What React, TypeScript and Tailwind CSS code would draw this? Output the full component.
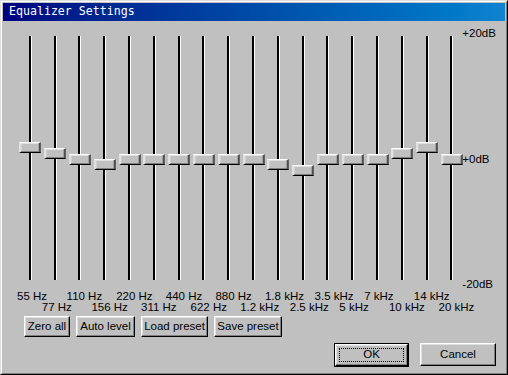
import React from 'react';

interface Band {
  label: string;
  top: number;
}

// thumb offsets are pixels from the top of the track
const bands: Band[] = [
  { label: '55 Hz', top: 106 },
  { label: '77 Hz', top: 112 },
  { label: '110 Hz', top: 118 },
  { label: '156 Hz', top: 123 },
  { label: '220 Hz', top: 118 },
  { label: '311 Hz', top: 118 },
  { label: '440 Hz', top: 118 },
  { label: '622 Hz', top: 118 },
  { label: '880 Hz', top: 118 },
  { label: '1.2 kHz', top: 118 },
  { label: '1.8 kHz', top: 123 },
  { label: '2.5 kHz', top: 129 },
  { label: '3.5 kHz', top: 118 },
  { label: '5 kHz', top: 118 },
  { label: '7 kHz', top: 118 },
  { label: '10 kHz', top: 112 },
  { label: '14 kHz', top: 106 },
  { label: '20 kHz', top: 118 },
];

const bevel =
  'border border-t-white border-l-white border-r-black border-b-black shadow-[inset_-1px_-1px_#808080,inset_1px_1px_#dfdfdf] bg-[#c0c0c0]';

function Slider({ band, index }: { band: Band; index: number }) {
  return (
    <div className="flex flex-col w-[24.8px]">
      <div className="relative h-[244px] flex justify-center">
        <div className="w-[3px] h-full bg-black border-r border-white" />
        <div
          className={`absolute left-1/2 -translate-x-1/2 w-[21px] h-[11px] ${bevel}`}
          style={{ top: band.top }}
        />
      </div>
      <div className="mt-[11px] h-[11px] leading-[11px] whitespace-nowrap ml-[-1px]">
        {index % 2 === 0 ? band.label : ''}
      </div>
      <div className="h-[11px] leading-[11px] whitespace-nowrap ml-[-1px]">
        {index % 2 === 1 ? band.label : ''}
      </div>
    </div>
  );
}

function Button({ label, width }: { label: string; width: string }) {
  return (
    <button className={`${width} h-[21px] flex items-center justify-center ${bevel}`}>
      {label}
    </button>
  );
}

export default function App() {
  return (
    <div className="w-[508px] h-[375px] border border-t-[#dfdfdf] border-l-[#dfdfdf] border-r-black border-b-black bg-[#c0c0c0] text-black font-['Liberation_Sans',Arial,sans-serif] text-[11.5px]">
      <div className="h-full border border-t-white border-l-white border-r-[#808080] border-b-[#808080] p-[1px] flex flex-col">
        <div className="h-[18px] shrink-0 flex items-center pl-[6px] bg-linear-to-r from-[#000080] to-[#1084d0] text-white font-['DejaVu_Sans_Mono',monospace] text-[11.6px]">
          Equalizer Settings
        </div>

        <div className="flex items-start">
          <div className="ml-[15px] mt-[15px] flex">
            {bands.map((b, i) => (
              <Slider key={b.label} band={b} index={i} />
            ))}
          </div>
          <div className="ml-[-2px] mt-[6px] h-[264px] flex flex-col justify-between leading-[13px]">
            <span>+20dB</span>
            <span>+0dB</span>
            <span>-20dB</span>
          </div>
        </div>

        <div className="ml-[21px] mt-[3px] flex gap-[6px]">
          <Button label="Zero all" width="w-[46px]" />
          <Button label="Auto level" width="w-[59px]" />
          <Button label="Load preset" width="w-[67px]" />
          <Button label="Save preset" width="w-[68px]" />
        </div>

        <div className="mt-[6px] pr-[9px] flex justify-end gap-[11px]">
          <button className="w-[75px] h-[24px] border border-black">
            <div className={`h-full p-[3px] ${bevel}`}>
              <div className="h-full border border-dotted border-black flex items-center justify-center">
                OK
              </div>
            </div>
          </button>
          <button className={`w-[76px] h-[23px] flex items-center justify-center ${bevel}`}>
            Cancel
          </button>
        </div>
      </div>
    </div>
  );
}
